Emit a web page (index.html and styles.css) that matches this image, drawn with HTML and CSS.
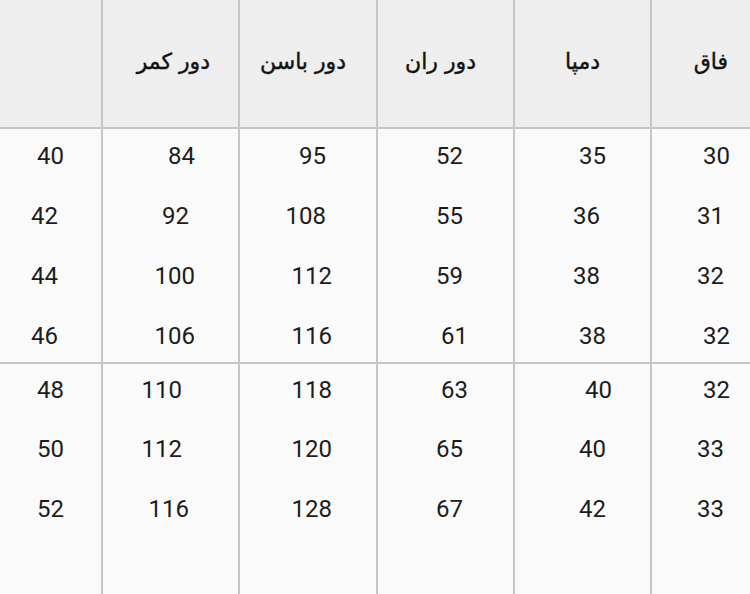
FILE: index.html
```
<!DOCTYPE html>
<html lang="fa">
<head>
<meta charset="utf-8">
<title>جدول سایز</title>
<link rel="stylesheet" href="styles.css">
</head>
<body>
<div class="table">
  <div class="row head">
    <div class="cell c0"></div>
    <div class="cell c1"><span>دور کمر</span></div>
    <div class="cell c2"><span>دور باسن</span></div>
    <div class="cell c3"><span>دور ران</span></div>
    <div class="cell c4"><span>دمپا</span></div>
    <div class="cell c5"><span>فاق</span></div>
  </div>
  <div class="section s1">
    <div class="row">
      <div class="cell c0"><span>40</span></div>
      <div class="cell c1"><span>84</span></div>
      <div class="cell c2"><span class="n6">95</span></div>
      <div class="cell c3"><span>52</span></div>
      <div class="cell c4"><span>35</span></div>
      <div class="cell c5"><span>30</span></div>
    </div>
    <div class="row">
      <div class="cell c0"><span class="n6">42</span></div>
      <div class="cell c1"><span class="n6">92</span></div>
      <div class="cell c2"><span class="n6">108</span></div>
      <div class="cell c3"><span>55</span></div>
      <div class="cell c4"><span class="n6">36</span></div>
      <div class="cell c5"><span class="n6">31</span></div>
    </div>
    <div class="row">
      <div class="cell c0"><span class="n6">44</span></div>
      <div class="cell c1"><span>100</span></div>
      <div class="cell c2"><span>112</span></div>
      <div class="cell c3"><span>59</span></div>
      <div class="cell c4"><span class="n6">38</span></div>
      <div class="cell c5"><span class="n6">32</span></div>
    </div>
    <div class="row last">
      <div class="cell c0"><span class="n6">46</span></div>
      <div class="cell c1"><span>106</span></div>
      <div class="cell c2"><span>116</span></div>
      <div class="cell c3"><span class="p5">61</span></div>
      <div class="cell c4"><span>38</span></div>
      <div class="cell c5"><span>32</span></div>
    </div>
  </div>
  <div class="section s2">
    <div class="row">
      <div class="cell c0"><span>48</span></div>
      <div class="cell c1"><span class="n13">110</span></div>
      <div class="cell c2"><span>118</span></div>
      <div class="cell c3"><span class="p5">63</span></div>
      <div class="cell c4"><span class="p6">40</span></div>
      <div class="cell c5"><span>32</span></div>
    </div>
    <div class="row">
      <div class="cell c0"><span>50</span></div>
      <div class="cell c1"><span class="n13">112</span></div>
      <div class="cell c2"><span>120</span></div>
      <div class="cell c3"><span>65</span></div>
      <div class="cell c4"><span>40</span></div>
      <div class="cell c5"><span class="n6">33</span></div>
    </div>
    <div class="row last">
      <div class="cell c0"><span>52</span></div>
      <div class="cell c1"><span class="n6">116</span></div>
      <div class="cell c2"><span>128</span></div>
      <div class="cell c3"><span>67</span></div>
      <div class="cell c4"><span>42</span></div>
      <div class="cell c5"><span class="n6">33</span></div>
    </div>
  </div>
</div>
</body>
</html>
```
FILE: styles.css
```
html, body {
  margin: 0;
  padding: 0;
  background: #fafafa;
}

.table {
  display: flex;
  flex-direction: column;
  width: 750px;
  height: 594px;
  overflow: hidden;
  color: #1c1c1c;
  font-family: Roboto, "Liberation Sans", sans-serif;
  font-size: 24px;
}

.row {
  display: grid;
  grid-template-columns: 101px 137px 138px 137px 137px 100px;
  flex: none;
}

.cell {
  box-sizing: border-box;
  text-align: right;
  line-height: 24px;
}

.cell + .cell {
  border-left: 2px solid #c6c6c6;
}

.c0 { padding-right: 37px; }
.c1 { padding-right: 43px; }
.c2 { padding-right: 44px; }
.c3 { padding-right: 50px; }
.c4 { padding-right: 44px; }
.c5 { padding-right: 20px; }

.head {
  height: 129px;
  background: #eeeeee;
  border-bottom: 2px solid #c6c6c6;
  box-sizing: border-box;
}

.head .cell {
  display: flex;
  justify-content: flex-start;
  align-items: center;
  padding-bottom: 4px;
  direction: rtl;
  font-family: "DejaVu Sans", sans-serif;
  font-size: 22px;
  font-weight: normal;
  color: #111111;
  -webkit-text-stroke: 0.4px #111111;
}

.head .c1 { padding-right: 28px; }
.head .c2 { padding-right: 30px; }
.head .c3 { padding-right: 37px; }
.head .c4 { padding-right: 50px; }
.head .c5 { padding-right: 22px; }

.section {
  display: flex;
  flex-direction: column;
}

.s1 {
  height: 235px;
  flex: none;
  border-bottom: 2px solid #c6c6c6;
  box-sizing: border-box;
}

.s1 .row { height: 60px; }
.s1 .cell { padding-top: 15px; }

.s2 {
  flex: 1;
}

.s2 .row { height: 59.5px; }
.s2 .cell { padding-top: 13.5px; }

.section .row.last {
  flex: 1;
  height: auto;
}

.n6 { margin-right: 6px; }
.n13 { margin-right: 13px; }
.p5 { margin-right: -5px; }
.p6 { margin-right: -6px; }
```
